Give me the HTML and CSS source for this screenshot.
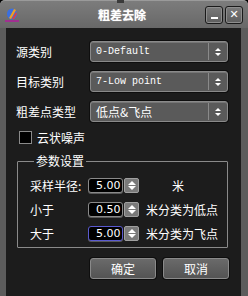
FILE: index.html
```html
<!doctype html>
<html>
  <head>
    <meta charset="UTF-8">
    <title>粗差去除</title>
    <link rel="stylesheet" href="styles.css">
  </head>
  <body>
    <div class="window">
      <div class="handle"></div>
      <div class="titlebar">
        <svg class="logo" width="18" height="16" viewBox="0 0 18 16">
          <ellipse cx="9" cy="6" rx="5" ry="5.5" fill="#3a6fe0"/>
          <path d="M6 10 L11 1 L13 2 L8 11 Z" fill="#f0a020"/>
          <path d="M9 11 L13 4 L14 6 L11 11 Z" fill="#e04040"/>
          <rect x="2" y="12" width="14" height="2" fill="#a03090"/>
        </svg>
        <div class="title">粗差去除</div>
        <div class="tbtn"><span class="min"></span></div>
        <div class="tbtn">✕</div>
      </div>

      <div class="content">
        <div class="row">
          <div class="label">源类别</div>
          <div class="combo mono">0-Default<span class="arrows"><span class="up"></span><span class="down"></span></span></div>
        </div>
        <div class="row">
          <div class="label">目标类别</div>
          <div class="combo mono">7-Low point<span class="arrows"><span class="up"></span><span class="down"></span></span></div>
        </div>
        <div class="row">
          <div class="label">粗差点类型</div>
          <div class="combo">低点&amp;飞点<span class="arrows"><span class="up"></span><span class="down"></span></span></div>
        </div>

        <div class="check">
          <span class="box"></span>
          <span>云状噪声</span>
        </div>

        <fieldset class="group">
          <legend>参数设置</legend>
          <div class="prow">
            <div class="plabel">采样半径:</div>
            <div class="spin"><span class="field">5.00</span><span class="sbtn"><span class="up"></span><span class="down"></span></span></div>
            <div class="unit solo">米</div>
          </div>
          <div class="prow">
            <div class="plabel">小于</div>
            <div class="spin"><span class="field">0.50</span><span class="sbtn"><span class="up"></span><span class="down"></span></span></div>
            <div class="unit">米分类为低点</div>
          </div>
          <div class="prow">
            <div class="plabel">大于</div>
            <div class="spin"><span class="field active">5.00</span><span class="sbtn"><span class="up"></span><span class="down"></span></span></div>
            <div class="unit">米分类为飞点</div>
          </div>
        </fieldset>

        <div class="buttons">
          <div class="btn">确定</div>
          <div class="btn">取消</div>
        </div>
      </div>
    </div>
  </body>
</html>
```

FILE: styles.css
```css
* {
  box-sizing: border-box;
}

body {
  margin: 0;
  background: #000;
  font-family: "Noto Sans CJK SC", "DejaVu Sans", sans-serif;
  font-size: 12px;
  color: #fff;
}

/* Window frame */
.window {
  position: relative;
  width: 248px;
  height: 296px;
  background: #5c5c5c;
  border-radius: 5px 5px 0 0;
  display: flex;
  flex-direction: column;
}

.handle {
  position: absolute;
  left: 117px;
  top: 0;
  width: 7px;
  height: 3px;
  background: #3a3a3a;
}

/* Title bar */
.titlebar {
  height: 28px;
  display: flex;
  align-items: center;
  padding: 0 5px 0 3px;
  background: linear-gradient(#7c7c7c, #686868);
  border-radius: 5px 5px 0 0;
  border-top: 1px solid #9a9a9a;
}

.logo {
  margin-top: 2px;
}

.title {
  flex: 1;
  text-align: center;
  font-weight: bold;
  font-size: 12px;
  padding-left: 20px;
  text-shadow: 0 0 1px #ccc;
}

.tbtn {
  width: 18px;
  height: 18px;
  margin-left: 2px;
  border: 1px solid #1a1a1a;
  border-radius: 3px;
  background: linear-gradient(#7a7a7a, #5e5e5e);
  box-shadow: inset 0 0 0 1px #8e8e8e;
  display: flex;
  align-items: center;
  justify-content: center;
  font-size: 11px;
  font-weight: bold;
  font-family: "DejaVu Sans", sans-serif;
}

.tbtn .min {
  width: 7px;
  height: 2px;
  margin-top: 6px;
  background: #fff;
}

/* Dialog body */
.content {
  flex: 1;
  margin: 0 7px 0 6px;
  background: #1c1c1c;
  padding: 13px 0 0 10px;
}

.row {
  display: flex;
  align-items: center;
  height: 21px;
  margin-bottom: 9px;
}

.label {
  width: 74px;
}

.combo {
  position: relative;
  width: 138px;
  height: 21px;
  display: flex;
  align-items: center;
  padding-left: 5px;
  background: #5a5a5a;
  border: 1px solid #8a8a8a;
  border-radius: 3px;
  box-shadow: 0 0 0 1px #0e0e0e, inset 0 1px 0 #767676;
}

.mono {
  font-family: "Liberation Mono", monospace;
  font-size: 10px;
}

.arrows {
  position: absolute;
  right: 0;
  top: 1px;
  bottom: 1px;
  width: 19px;
  border-left: 1px solid #8a8a8a;
  display: flex;
  flex-direction: column;
  align-items: center;
  justify-content: center;
  gap: 2px;
}

.up {
  width: 0;
  height: 0;
  border-left: 3px solid transparent;
  border-right: 3px solid transparent;
  border-bottom: 3px solid #fff;
}

.down {
  width: 0;
  height: 0;
  border-left: 3px solid transparent;
  border-right: 3px solid transparent;
  border-top: 3px solid #fff;
}

/* Checkbox */
.check {
  display: flex;
  align-items: center;
  gap: 5px;
  height: 13px;
  margin: 0 0 10px 3px;
}

.check .box {
  width: 13px;
  height: 13px;
  background: #000;
  border: 1px solid #8a8a8a;
}

/* Group box */
.group {
  margin: 0;
  width: 211px;
  height: 94px;
  margin-left: 1px;
  padding: 10px 0 0 12px;
  border: 1px solid #8a8a8a;
  border-radius: 1px;
}

.group legend {
  padding: 0 2px;
  margin-left: 4px;
  line-height: 14px;
}

.prow {
  display: flex;
  align-items: center;
  height: 15px;
  margin-bottom: 9px;
}

.plabel {
  width: 58px;
  flex-shrink: 0;
}

.spin {
  display: flex;
  align-items: center;
  flex-shrink: 0;
}

.field {
  flex-shrink: 0;
  width: 35px;
  height: 15px;
  background: #000;
  border: 1px solid #8a8a8a;
  border-radius: 3px;
  padding-left: 7px;
  font-family: "DejaVu Sans", sans-serif;
  font-size: 11px;
  line-height: 13px;
  box-shadow: 0 1px 0 #5a5a5a;
}

.field.active {
  border-color: #5a5ad0;
}

.sbtn {
  flex-shrink: 0;
  width: 15px;
  height: 15px;
  margin-left: 1px;
  background: #7a7a7a;
  border: 1px solid #a0a0a0;
  border-radius: 2px;
  display: flex;
  flex-direction: column;
  align-items: center;
  justify-content: center;
  gap: 1px;
}

.sbtn .up {
  border-left-width: 4px;
  border-right-width: 4px;
  border-bottom-width: 4px;
}

.sbtn .down {
  border-left-width: 4px;
  border-right-width: 4px;
  border-top-width: 4px;
}

.unit {
  margin-left: 7px;
}

.unit.solo {
  margin-left: 33px;
}

/* Bottom buttons */
.buttons {
  display: flex;
  gap: 7px;
  margin: 10px 0 0 74px;
}

.btn {
  width: 66px;
  height: 21px;
  display: flex;
  align-items: center;
  justify-content: center;
  background: linear-gradient(#6a6a6a, #545454);
  border: 1px solid #8a8a8a;
  border-radius: 3px;
  box-shadow: 0 0 0 1px #0e0e0e;
}
```
